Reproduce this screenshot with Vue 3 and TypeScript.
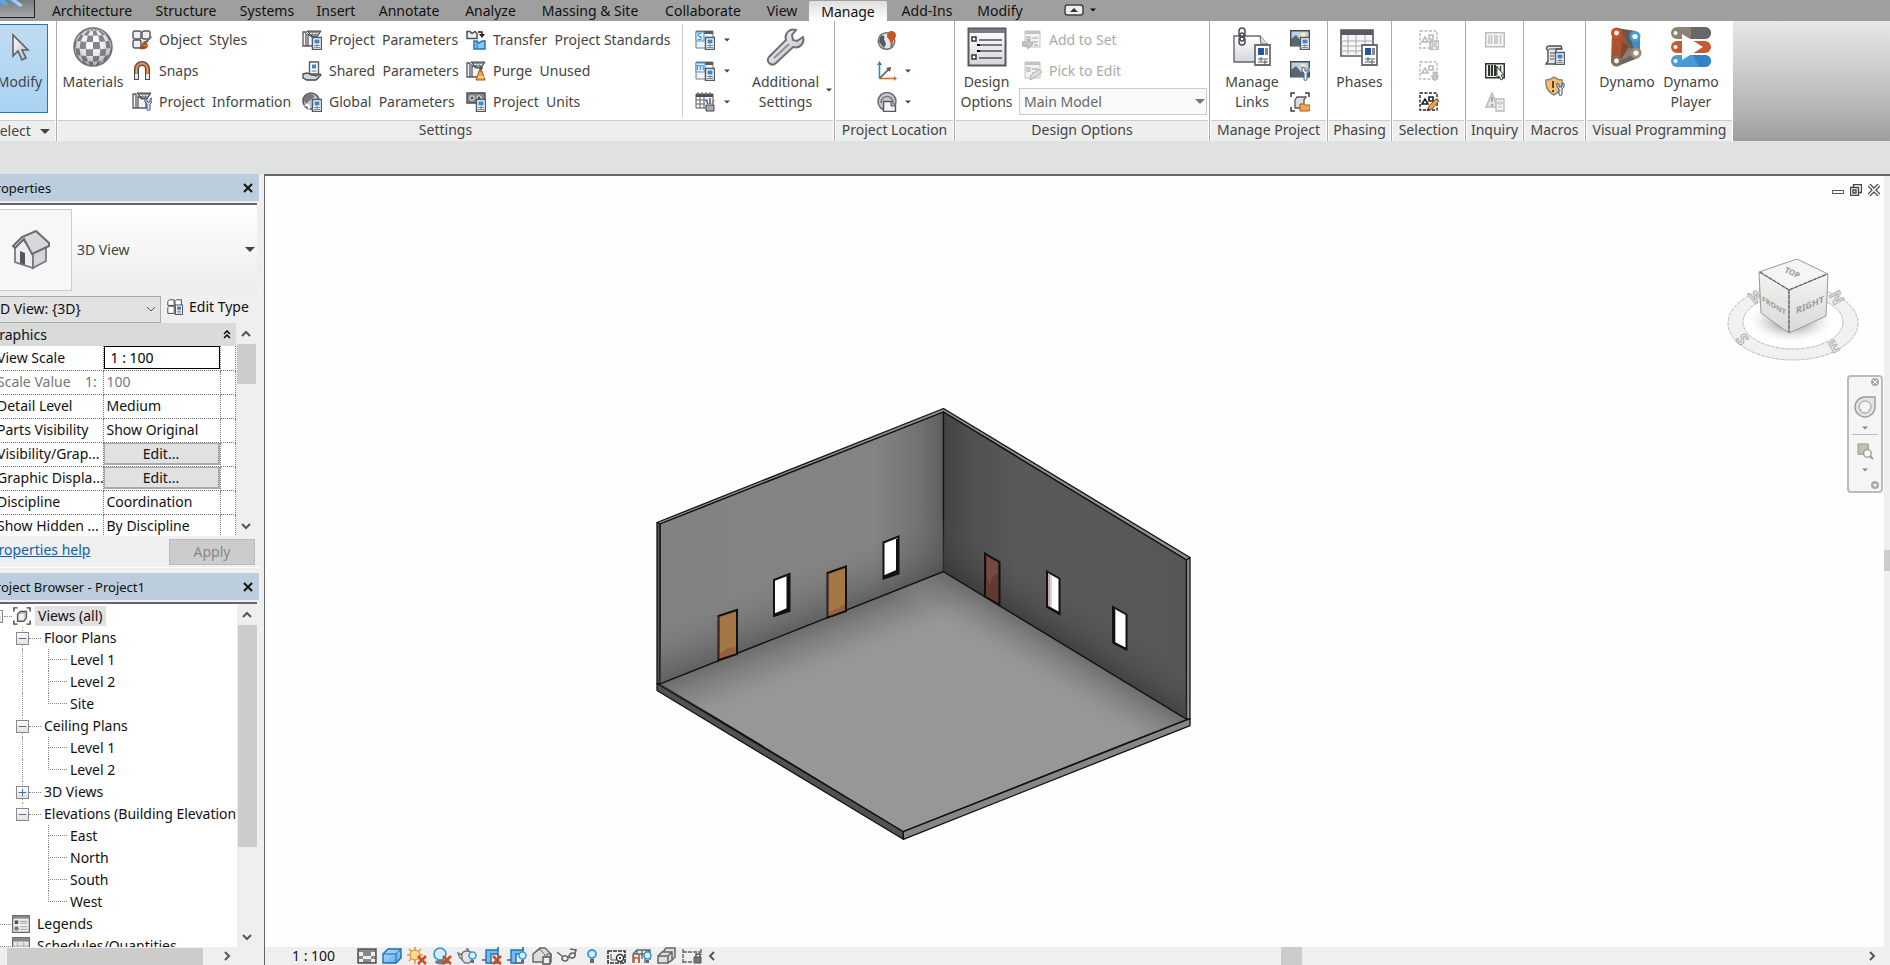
<script setup lang="ts">
interface SmallCommand {
  icon: string
  text: string
}

interface TreeRow {
  level: number
  label: string
  open?: boolean
  last?: boolean
  trunk?: boolean
}

const tabs: string[] = [
  'Architecture', 'Structure', 'Systems', 'Insert', 'Annotate', 'Analyze',
  'Massing & Site', 'Collaborate', 'View', 'Manage', 'Add-Ins', 'Modify',
]

const settingsColumns: SmallCommand[][] = [
  [
    { icon: 'styles', text: 'Object  Styles' },
    { icon: 'snaps', text: 'Snaps' },
    { icon: 'info', text: 'Project  Information' },
  ],
  [
    { icon: 'params', text: 'Project  Parameters' },
    { icon: 'shared', text: 'Shared  Parameters' },
    { icon: 'global', text: 'Global  Parameters' },
  ],
  [
    { icon: 'transfer', text: 'Transfer  Project Standards' },
    { icon: 'purge', text: 'Purge  Unused' },
    { icon: 'units', text: 'Project  Units' },
  ],
]

const templates: SmallCommand[] = [
  { icon: 'structural', text: 'Structural Settings' },
  { icon: 'mep', text: 'MEP Settings' },
  { icon: 'panel', text: 'Panel Schedule Templates' },
]

const selection: SmallCommand[] = [
  { icon: 'selsave', text: 'Save' },
  { icon: 'selload', text: 'Load' },
  { icon: 'seledit', text: 'Edit' },
]

const inquiry: SmallCommand[] = [
  { icon: 'ids', text: 'IDs of Selection' },
  { icon: 'idpick', text: 'Select by ID' },
  { icon: 'warning', text: 'Warnings' },
]

const projectImages: SmallCommand[] = [
  { icon: 'decal', text: 'Decal Types' },
  { icon: 'image', text: 'Manage Images' },
  { icon: 'starting', text: 'Starting View' },
]

const viewControls: string[] = [
  'detail', 'visual', 'sun', 'shadow', 'render', 'crop', 'cropshow',
  'lock', 'glasses', 'bulb', 'temp', 'analytic', 'displace', 'constraint',
]

const treeRows: TreeRow[] = [
  { level: 1, label: 'Floor Plans', open: true },
  { level: 2, label: 'Level 1', trunk: true },
  { level: 2, label: 'Level 2', trunk: true },
  { level: 2, label: 'Site', trunk: true, last: true },
  { level: 1, label: 'Ceiling Plans', open: true },
  { level: 2, label: 'Level 1', trunk: true },
  { level: 2, label: 'Level 2', trunk: true, last: true },
  { level: 1, label: '3D Views', open: false },
  { level: 1, label: 'Elevations (Building Elevation)', open: true, last: true },
  { level: 2, label: 'East' },
  { level: 2, label: 'North' },
  { level: 2, label: 'South' },
  { level: 2, label: 'West', last: true },
]

// Checkered globe: project latitude/longitude cells onto a disc of radius 19.
function point(lat: number, lon: number): string {
  const a = (lat * Math.PI) / 180
  const b = (lon * Math.PI) / 180
  const x = 20 + 19 * Math.cos(a) * Math.sin(b)
  const y = 20 - 19 * (Math.sin(a) * 0.97 - Math.cos(a) * Math.cos(b) * 0.12)
  return `${x.toFixed(1)} ${y.toFixed(1)}`
}

const step = 22.5
const cells: string[] = []
for (let i = -4; i < 4; i++) {
  for (let j = -4; j < 4; j++) {
    if ((i + j) % 2 !== 0) continue
    const lat = i * step
    const lon = j * step
    const pts: string[] = []
    for (let k = 0; k <= 4; k++) pts.push(point(lat, lon + (step * k) / 4))
    for (let k = 4; k >= 0; k--) pts.push(point(lat + step, lon + (step * k) / 4))
    cells.push(`M${pts.join('L')}Z`)
  }
}
const checker = cells.join('')
</script>

<template>
  <div class="app">
    <svg class="defs" aria-hidden="true">
      <defs>
        <linearGradient id="g-paper" x1="0" y1="0" x2="0" y2="1">
          <stop offset="0" stop-color="#fff" /><stop offset="1" stop-color="#d4d6da" />
        </linearGradient>
        <radialGradient id="g-ball" cx=".5" cy=".4" r=".6">
          <stop offset="0" stop-color="#fff" stop-opacity="0" /><stop offset="1" stop-color="#333" stop-opacity=".45" />
        </radialGradient>
        <linearGradient id="g-steel" x1="0" y1="0" x2="1" y2="1">
          <stop offset="0" stop-color="#fff" /><stop offset="1" stop-color="#b4b6ba" />
        </linearGradient>
        <linearGradient id="g-blue" x1="0" y1="0" x2="1" y2="1">
          <stop offset="0" stop-color="#b9e0fa" /><stop offset="1" stop-color="#55a8e4" />
        </linearGradient>
      </defs>

      <symbol id="i-card" viewBox="0 0 20 20">
        <path d="M10.500 7.500h9v12h-9z" fill="#fff" stroke="#555a63" stroke-width="1.500" />
        <path d="M12.500 9.500h5v4h-5z" fill="#3a86cf" />
        <path d="M12 15.500h6M15 14v3M12 17.500h6" stroke="#667" stroke-width=".8" />
      </symbol>
      <symbol id="i-sheet" viewBox="0 0 20 20">
        <path d="M1 2h3v14H1zM4 16h10V4L10 7 6 4v12" fill="#f1f2f3" stroke="#55585f" stroke-width="1.300" />
        <path d="M5 1h14l-4 6h-4z" fill="#8b8e93" stroke="#444" />
        <path d="M8 3.500h8" stroke="#eee" stroke-dasharray="2 1" />
      </symbol>

      <symbol id="i-caret" viewBox="0 0 8 4"><path d="M0 0h8L4 4z" /></symbol>
      <symbol id="i-chev" viewBox="0 0 10 10"><path d="M1 7l4-4 4 4" fill="none" stroke="currentColor" stroke-width="2" /></symbol>
      <symbol id="i-x" viewBox="0 0 10 10"><path d="M1 1l8 8M9 1L1 9" stroke="currentColor" stroke-width="2" fill="none" /></symbol>

      <symbol id="i-styles" viewBox="0 0 20 20">
        <rect x="1" y="1" width="8" height="8" rx="2" fill="#eee" stroke="#55585f" stroke-width="1.400" />
        <rect x="10" y="1" width="8" height="8" rx="2" fill="#eee" stroke="#55585f" stroke-width="1.400" />
        <rect x="1" y="10" width="8" height="8" rx="2" fill="#eee" stroke="#55585f" stroke-width="1.400" />
        <path d="M19 6l-7 6 2 2 6-7z" fill="#666b74" /><path d="M13 11l3 4c0 4-4 5-9 4 3-1 2-7 6-8z" fill="#a84f1d" /><path d="M11 15l4 1" stroke="#e69b55" />
      </symbol>
      <symbol id="i-snaps" viewBox="0 0 20 20">
        <path d="M4.500 19V8a5.500 5.500 0 0 1 11 0v11" fill="none" stroke="#454950" stroke-width="5" />
        <path d="M4.500 13V8a5.500 5.500 0 0 1 11 0v5" fill="none" stroke="#cf6b33" stroke-width="3" />
        <path d="M4.500 13V8a5.500 5.500 0 0 1 11 0v5" fill="none" stroke="#f0a671" stroke-width="1" />
        <path d="M4.500 13v5M15.500 13v5" stroke="#e6e6e8" stroke-width="3" />
      </symbol>
      <symbol id="i-info" viewBox="0 0 20 20">
        <use href="#i-sheet" /><path d="M13 6v4l2 2v5a1.500 1.500 0 0 0 3 0v-5l2-2V6l-2 1v3h-3V7z" fill="#dbe4f0" stroke="#3a4f78" stroke-width="1" />
      </symbol>
      <symbol id="i-params" viewBox="0 0 20 20"><use href="#i-sheet" /><use href="#i-card" /></symbol>
      <symbol id="i-shared" viewBox="0 0 20 20">
        <path d="M7.500 1h9v12h-9z" fill="#fff" stroke="#555a63" stroke-width="1.400" /><path d="M10 3.500h4v4h-4z" fill="#3a86cf" /><path d="M9.500 10h5" stroke="#667" />
        <path d="M1 13l4-1 5 2h3l1 1 4-2 1 1-5 5H5l-4-2z" fill="#d3d4d6" stroke="#454950" stroke-width="1.300" />
      </symbol>
      <symbol id="i-global" viewBox="0 0 20 20">
        <circle cx="9" cy="9" r="8" fill="#c8cacd" stroke="#55585f" stroke-width="1.600" />
        <path d="M9 2c4 1 4 3 2 4L7 9l-3 3-2-3c0-4 3-7 7-7z" fill="#73777e" /><path d="M3 14c3-3 4 0 4 3" stroke="#fff" fill="none" stroke-width="2" /><use href="#i-card" />
      </symbol>
      <symbol id="i-transfer" viewBox="0 0 20 20">
        <path d="M1 1.500h3l2 2 3-2 2 2v5H1z" fill="#eee" stroke="#4d5057" stroke-width="1.500" />
        <path d="M12 2h4v4" stroke="#222" fill="none" stroke-width="1.500" /><path d="M13 4h6l-3 4z" fill="#222" />
        <path d="M8 11h3l2 2 3-2h3v8H8z" fill="#8cc6f2" stroke="#1c75bd" stroke-width="1.500" /><path d="M11 12v7" stroke="#1c75bd" />
      </symbol>
      <symbol id="i-purge" viewBox="0 0 20 20">
        <use href="#i-sheet" /><path d="M15 5v7M14 7h3" stroke="#4d5057" stroke-width="1.500" /><path d="M13 10h3l3 9h-9z" fill="#eea24d" stroke="#a65c1d" /><path d="M12 16h6" stroke="#fff" />
      </symbol>
      <symbol id="i-units" viewBox="0 0 20 20">
        <path d="M1 1h18v10H1z" fill="#85888d" stroke="#494c52" stroke-width="1.400" /><circle cx="6" cy="6" r="2.200" fill="#555" stroke="#fff" /><circle cx="13" cy="6" r="2.200" fill="#555" stroke="#fff" /><use href="#i-card" />
      </symbol>
      <symbol id="i-window" viewBox="0 0 20 20"><path d="M1 1h17v17H1z" fill="#f1f2f3" stroke="#777b82" /><path d="M1 1h17v3H1z" fill="#585c63" /></symbol>
      <symbol id="i-structural" viewBox="0 0 20 20">
        <use href="#i-window" /><path d="M1 2h8v9H1z" fill="#d8edfb" stroke="#4c9bdb" /><text x="2" y="10" font-size="9" font-family="Noto Sans" fill="#1c75bd">S</text><use href="#i-card" />
      </symbol>
      <symbol id="i-mep" viewBox="0 0 20 20">
        <use href="#i-window" /><path d="M1 2h9v9H1z" fill="#d8edfb" stroke="#4c9bdb" /><text x="1" y="9" font-size="9" font-family="Noto Sans" fill="#1c75bd">m</text><use href="#i-card" />
      </symbol>
      <symbol id="i-panel" viewBox="0 0 20 20">
        <path d="M1 2h17v14H1z" fill="#f5f5f5" stroke="#555" /><path d="M1 2h17v3H1z" fill="#4d5057" /><path d="M3 0v4M7 0v4M11 0v4M15 0v4M1 8h12M1 12h9M5 5v11M9 5v11" stroke="#666" />
        <path d="M11 13h8v6h-8z" fill="#aaacb0" stroke="#444" /><path d="M13 12l-2-4M15 12V6" stroke="#2e62b8" stroke-width="1.600" /><path d="M17 12l2-4" stroke="#cf6b33" stroke-width="1.600" />
      </symbol>
      <symbol id="i-pin" viewBox="0 0 20 20">
        <circle cx="9.500" cy="11" r="8.300" fill="#e3e5e8" stroke="#6c7078" stroke-width="1.500" /><path d="M3 7c4-3 5-1 4 2l2 5-2 4-5-6z" fill="#555a63" /><path d="M13 15l4-2-3 5z" fill="#777b82" />
        <path d="M14.500 16L12 9h5z" fill="#ca5424" /><circle cx="14.500" cy="5.500" r="4.500" fill="#ca5424" />
      </symbol>
      <symbol id="i-coords" viewBox="0 0 20 20">
        <path d="M2.500 2v15.500" stroke="#2586d3" stroke-width="1.600" fill="none" /><path d="M0 4l2.500-4L5 4z" fill="#2586d3" /><path d="M2.500 17.500H18" stroke="#d96a2b" stroke-width="1.600" /><path d="M17 15l3 2.500-3 2.500z" fill="#d96a2b" />
        <path d="M3 17L12 8" stroke="#555" stroke-width="1.600" /><path d="M9 7l5-1-1 5z" fill="#555" />
      </symbol>
      <symbol id="i-position" viewBox="0 0 20 20">
        <circle cx="10" cy="9.500" r="9" fill="#c6c8cc" stroke="#686c73" stroke-width="1.500" /><path d="M4 11a6 6 0 0 1 12-1" stroke="#777" fill="none" stroke-width="1.500" /><path d="M6.500 9.500h8l4 4v6h-12z" fill="#f2f2f3" stroke="#55585f" stroke-width="1.400" /><path d="M14 9v5h5" fill="#aaa" stroke="#55585f" />
      </symbol>
      <symbol id="i-optset" viewBox="0 0 20 20"><path d="M3 1h15v16H3z" fill="#f4f4f4" stroke="#c2c4c2" /><path d="M3 1h15v3H3z" fill="#c2c4c2" /><path d="M5 7h3v3H5zM10 8h6M10 12h6M12 15h4" stroke="#bbb" fill="none" stroke-width="1.300" /></symbol>
      <symbol id="i-addset" viewBox="0 0 20 20"><use href="#i-optset" /><path d="M0 12h6V9l5 5-5 5v-3H0z" fill="#c7c8c7" stroke="#aaa" /></symbol>
      <symbol id="i-pick" viewBox="0 0 20 20"><use href="#i-optset" /><path d="M8 19l1-5 8-6 3 3-8 6z" fill="#ddd" stroke="#b1b3b1" /></symbol>
      <symbol id="i-photo" viewBox="0 0 20 20">
        <path d="M.7.700h18.600v15H.7z" fill="#b8d2e8" stroke="#454950" stroke-width="1.400" /><path d="M1 9l5-4 5 6 3-2 5 3v4H1z" fill="#5a666d" /><circle cx="13" cy="5" r="2.400" fill="#ffeaa0" />
      </symbol>
      <symbol id="i-decal" viewBox="0 0 20 20"><use href="#i-photo" /><use href="#i-card" /></symbol>
      <symbol id="i-image" viewBox="0 0 20 20"><use href="#i-photo" /><path d="M12 6v4l2 2v6a1.500 1.500 0 0 0 3 0v-6l3-2V6l-2 1v3h-3V7z" fill="#e8edf4" stroke="#4d678f" /></symbol>
      <symbol id="i-starting" viewBox="0 0 20 20">
        <path d="M1 5V1h4M15 1h4v4M1 15v4h4" fill="none" stroke="#3b3e44" stroke-width="1.500" /><path d="M5 8l2-3h9l-2 3v8H5z" fill="#ddd" stroke="#55585f" stroke-width="1.300" /><path d="M10 12h4l1 1h5v5l-1 1h-9z" fill="#f1a453" stroke="#a65c1d" />
      </symbol>
      <symbol id="i-marquee" viewBox="0 0 20 20">
        <path d="M1 1h17v17H1z" fill="none" stroke="currentColor" stroke-width="1.400" stroke-dasharray="3 1.500" /><path d="M3 12l3-5 3 5z" fill="none" stroke="currentColor" stroke-width="1.600" /><path d="M10 5h4v4h-4z" fill="none" stroke="currentColor" stroke-width="1.600" />
      </symbol>
      <symbol id="i-selsave" viewBox="0 0 20 20"><use href="#i-marquee" color="#bbb" /><path d="M11 11h9v9h-9z" fill="#eee" stroke="#b5b5b5" stroke-width="1.400" /><path d="M13 11v3h4v-3M13 20v-4h5v4" stroke="#aaa" fill="none" /></symbol>
      <symbol id="i-selload" viewBox="0 0 20 20"><use href="#i-marquee" color="#bbb" /><path d="M14 11h4v4h2l-4 5-4-5h2z" fill="#c4c4c4" stroke="#aaa" stroke-width=".7" /></symbol>
      <symbol id="i-seledit" viewBox="0 0 20 20"><use href="#i-marquee" color="#222" /><path d="M8 19l2-5 7-7 3 2-7 8z" fill="#e9a14e" stroke="#93521c" /><path d="M8 19l1-3 2 2z" fill="#333" /></symbol>
      <symbol id="i-bars" viewBox="0 0 20 20"><path d="M.7 2.700h18.600v14H.7z" fill="#f5f5f5" stroke="currentColor" stroke-width="1.500" /><path d="M4 5v9M6.500 5v9M10 5v9M12 5v9M15.500 5v9" stroke="currentColor" stroke-width="1.400" /></symbol>
      <symbol id="i-ids" viewBox="0 0 20 20"><use href="#i-bars" color="#bdbdbd" /></symbol>
      <symbol id="i-idpick" viewBox="0 0 20 20"><use href="#i-bars" color="#2a3529" /><path d="M4 4v11M7 4v11M10 4v11" stroke="#2a3529" stroke-width="2" /><path d="M12 6l7 8h-3l2 4-2 1-2-4-2 2z" fill="#fff" stroke="#444" /></symbol>
      <symbol id="i-warning" viewBox="0 0 20 20"><path d="M1 15L7 1l6 14z" fill="#e4e4e4" stroke="#bbb" stroke-width="1.400" /><path d="M7 5v5M7 12v2" stroke="#aaa" stroke-width="2" /><path d="M11 7h8v12h-8z" fill="#f5f5f5" stroke="#bbb" stroke-width="1.400" /><path d="M13 10h4v2h-4zM13 15h4" stroke="#bbb" fill="none" /></symbol>
      <symbol id="i-macro" viewBox="0 0 20 20">
        <path d="M3 5v11l-2 3h10V4h6l-1-3H4C1 1 1 5 3 5z" fill="#e5e6e8" stroke="#4d5057" stroke-width="1.400" /><path d="M4 4h12M5 8h5M5 11h4M5 14h4" stroke="#4d5057" /><use href="#i-card" />
      </symbol>
      <symbol id="i-security" viewBox="0 0 20 20">
        <path d="M1 4c4 0 5-1 8-3 3 2 4 3 8 3 1 7-2 12-8 15C3 16 0 11 1 4z" fill="#f3bd72" stroke="#8b8577" stroke-width="1.400" /><path d="M8 5v7M8 14v2" stroke="#5b4325" stroke-width="2" /><path d="M12 7v4l2 2v5a1.500 1.500 0 0 0 3 0v-5l2-2V7l-2 1v3h-3V8z" fill="#dfe8f3" stroke="#3d5b89" />
      </symbol>
      <symbol id="i-edittype" viewBox="0 0 20 20">
        <path d="M1 3l2-2h6v7H1zM10 3l2-2h6v7h-8zM1 11l2-2h6v9H1z" fill="#fff" stroke="#444" stroke-width="1.200" /><use href="#i-card" />
      </symbol>
      <symbol id="i-views" viewBox="0 0 20 20"><path d="M1 5V1h4M15 1h4v4M1 15v4h4M15 19h4v-4" fill="none" stroke="#444" stroke-width="1.600" /><path d="M5 8l3-3h7v7l-3 4H5z" fill="#c9cbce" stroke="#555" stroke-width="1.400" /><path d="M7 8h5v6H7z" fill="#f5f5f5" /></symbol>
      <symbol id="i-legend" viewBox="0 0 20 20"><path d="M.7.700h18.600v18.600H.7z" fill="#eee" stroke="#6c6c6c" stroke-width="1.400" /><path d="M1 1h18v3H1z" fill="#888" /><path d="M3 6h4v4H3z" fill="#555" /><circle cx="5" cy="15" r="2.500" fill="#777" /><path d="M9 7h8M9 9h8M9 13h8M9 16h8" stroke="#999" /></symbol>
      <symbol id="i-schedule" viewBox="0 0 20 20"><path d="M.7.700h18.600v18.600H.7z" fill="#e6e6e6" stroke="#6c6c6c" stroke-width="1.400" /><path d="M1 1h18v4H1z" fill="#888" /><path d="M6 5v14M13 5v14M1 10h18M1 14h18" stroke="#aaa" /></symbol>

      <symbol id="i-cursor" viewBox="0 0 32 32"><path d="M9 4v21l5-5 4 9 4-2-4-8h6z" fill="url(#g-steel)" stroke="#5d6168" stroke-width="1.600" /></symbol>
      <symbol id="i-wrench" viewBox="0 0 40 40">
        <path d="M30 3c-6-2-12 3-10 10L3 30c-4 5 3 10 7 6l17-16c7 2 12-4 10-10l-6 4-4-1-1-5z" fill="url(#g-steel)" stroke="#6d7077" stroke-width="2" /><path d="M8 31L23 17" stroke="#8e9197" stroke-width="2" />
      </symbol>
      <symbol id="i-design" viewBox="0 0 40 40">
        <path d="M1.500 1.500h37v37h-37z" fill="url(#g-paper)" stroke="#55585f" stroke-width="2" /><path d="M2 2h36v4H2z" fill="#777b85" />
        <path d="M5 10h4v4H5zM5 28h4v4H5z" fill="#fff" stroke="#333" stroke-width="1.500" /><path d="M12 13h23M13 18h22M13 24h22M12 31h23" stroke="#4d5057" stroke-width="1.600" /><path d="M10 17h3v2h-3zM10 23h3v2h-3z" />
      </symbol>
      <symbol id="i-bigcard" viewBox="0 0 40 40"><path d="M23 18h15v20H23z" fill="#fff" stroke="#686c74" stroke-width="1.800" /><path d="M26 21h6v7h-6z" fill="#2554a5" /><path d="M33 21h3v7h-3z" fill="#888" /><path d="M26 32h10M26 35h10M29 30v4M33 33v4" stroke="#555" /></symbol>
      <symbol id="i-links" viewBox="0 0 40 40">
        <path d="M2 9h26l8 9v17H2z" fill="url(#g-paper)" stroke="#66696f" stroke-width="1.400" /><path d="M28 9l1 8h7" fill="#ddd" stroke="#66696f" />
        <g fill="none" stroke="#4a4d52" stroke-width="1.500"><rect x="7" y="1" width="6" height="9" rx="3" /><rect x="8" y="6" width="4" height="8" rx="2" /><rect x="7" y="10" width="6" height="8" rx="3" /></g><use href="#i-bigcard" />
      </symbol>
      <symbol id="i-phases" viewBox="0 0 40 40"><path d="M2 3h32v26H2z" fill="#f8f8f8" stroke="#55585f" stroke-width="1.600" /><path d="M2 3h32v5H2z" fill="#555a63" /><path d="M9 8v21M17 8v21M26 8v21M2 14h32M2 19h32M2 24h32" stroke="#aaa" /><use href="#i-bigcard" /></symbol>
      <symbol id="i-dynamo" viewBox="0 0 34 40">
        <path d="M7 1l19 3 5 22-3 5L8 39z" fill="#686561" /><path d="M7 1l14 4-6 14-9 15z" fill="#6a5750" /><path d="M2 6a5 5 0 0 1 9-2l8 16L10 36a5 5 0 0 1-9-2z" fill="#ad522f" /><path d="M12 14l7 6-9 14z" fill="#7f4939" />
        <path d="M19 20l7 6-16 8z" fill="#8a7f70" /><path d="M15 11l9-5 5 20-10-7z" fill="#55605f" /><path d="M21 10l9-1v17l-7-6z" fill="#468cc4" />
        <circle cx="6.500" cy="6" r="5.500" fill="#c85027" /><circle cx="6.500" cy="34" r="5.500" fill="#826f59" /><circle cx="25" cy="9.500" r="5.500" fill="#4a9bd5" /><circle cx="26" cy="26" r="5.500" fill="#9d8e79" />
        <g fill="#fff"><circle cx="6.500" cy="6" r="2.400" /><circle cx="6.500" cy="34" r="2.400" /><circle cx="25" cy="9.500" r="2.600" /><circle cx="26" cy="26" r="2.600" /></g>
      </symbol>
      <symbol id="i-player" viewBox="0 0 40 40">
        <rect y="0" width="40" height="12" rx="6" fill="#8b8271" /><path d="M20 0h14a6 6 0 0 1 0 12H20z" fill="#676767" /><rect y="14" width="40" height="12" rx="6" fill="#c85a31" /><rect y="28" width="40" height="12" rx="6" fill="#4a9bd5" /><path d="M22 28h12a6 6 0 0 1 0 12H28z" fill="#3383c4" />
        <g fill="#fff"><circle cx="4.500" cy="6" r="2" /><circle cx="4.500" cy="20" r="2" /><circle cx="4.500" cy="34" r="2" /><path d="M11 7l21 13-21 13z" /></g>
      </symbol>
      <symbol id="i-house" viewBox="0 0 40 40">
        <path d="M4 16L12 9l10 14v15L4 32z" fill="#eeeef0" stroke="#777a80" stroke-width="1.800" /><path d="M22 22l13-7v16L22 38z" fill="#d4d5d9" stroke="#777a80" stroke-width="1.800" />
        <path d="M2 16L11 7l14-6 13 12v3L21 24 13 9 4 18z" fill="#d8d8da" stroke="#696c73" stroke-width="2" /><path d="M9 21l5 2v12l-5-2z" fill="#54565b" />
      </symbol>

      <symbol id="i-detail" viewBox="0 0 20 20"><path d="M1 3h18v14H1z" fill="#888" stroke="#555" stroke-width="1.500" /><path d="M2 6h4v4H2zM14 6h4v4h-4zM6 10h8v3H6zM14 13h4v3h-4zM2 13h4v3H2z" fill="#eee" /></symbol>
      <symbol id="i-cross" viewBox="0 0 20 20"><path d="M11 10l8 8M19 10l-8 8" stroke="#ca4f25" stroke-width="2.600" /></symbol>
      <symbol id="i-lamp" viewBox="0 0 20 20"><circle cx="15.500" cy="9.500" r="3.500" fill="#d6effc" stroke="#3999d8" stroke-width="1.600" /><path d="M14 14h3v3h-3z" fill="#667" /></symbol>
      <symbol id="i-visual" viewBox="0 0 20 20"><path d="M1 8l5-5h13v9l-5 5H1z" fill="url(#g-blue)" stroke="#176fae" stroke-width="1.400" /><path d="M1 8h13l5-5M14 8v9" fill="none" stroke="#176fae" /></symbol>
      <symbol id="i-sun" viewBox="0 0 20 20"><path d="M8 0v18M0 9h16M2 3l12 12M14 3L2 15" stroke="#e29a3e" stroke-width="1.600" /><circle cx="8" cy="9" r="5" fill="#ffd993" stroke="#d9872b" /><use href="#i-cross" /></symbol>
      <symbol id="i-shadow" viewBox="0 0 20 20"><ellipse cx="10" cy="16" rx="7" ry="2.500" fill="#777" /><circle cx="8" cy="8" r="6" fill="#d3edfb" stroke="#378fc9" stroke-width="1.600" /><use href="#i-cross" /></symbol>
      <symbol id="i-render" viewBox="0 0 20 20"><path d="M5 8c1-4 9-4 10 0v6l-3 3H8l-3-3zM5 9L1 7l2 5 3 2M9 3h2v2" fill="#e3e3e3" stroke="#777" stroke-width="1.400" /><use href="#i-lamp" /></symbol>
      <symbol id="i-frame" viewBox="0 0 20 20"><path d="M0 14h4M16 5V1M8 17h8V8" fill="none" stroke="#555" stroke-width="1.500" /><path d="M4 17V4h12v4H9v9z" fill="#77baea" stroke="#1b75b9" stroke-width="1.400" /></symbol>
      <symbol id="i-crop" viewBox="0 0 20 20"><use href="#i-frame" /><use href="#i-cross" /></symbol>
      <symbol id="i-cropshow" viewBox="0 0 20 20"><use href="#i-frame" /><use href="#i-lamp" /></symbol>
      <symbol id="i-lock" viewBox="0 0 20 20"><path d="M1 8l7-6h5l6 6v8H1z" fill="#ddd" stroke="#666" stroke-width="1.400" /><path d="M1 8l7-5 5 6v9" fill="none" stroke="#666" /><path d="M11 11h7v7h-7z" fill="#eee" stroke="#555" stroke-width="1.400" /><path d="M15 11V8h4v3" fill="none" stroke="#555" /></symbol>
      <symbol id="i-glasses" viewBox="0 0 20 20"><path d="M0 6l5 4M5 12a3 3 0 1 0 6 0c-1-3-5-3-6 0zM12 10a3 3 0 1 0 6-2c-2-2-5-1-6 2zM11 12l1-2M18 8l1-4-6-1" fill="none" stroke="#666" stroke-width="1.600" /></symbol>
      <symbol id="i-bulb" viewBox="0 0 20 20"><circle cx="10" cy="8" r="4" fill="#d6effc" stroke="#3999d8" stroke-width="1.800" /><path d="M8 13h4v4H8z" fill="#667" /></symbol>
      <symbol id="i-temp" viewBox="0 0 20 20"><path d="M1 5h17v12H1z" fill="#eee" stroke="#333" stroke-width="1.600" stroke-dasharray="4 1" /><path d="M4 8v6h5" fill="none" stroke="#555" /><circle cx="13" cy="12" r="3.500" fill="#fff" stroke="#333" stroke-width="1.500" /><circle cx="13" cy="12" r="1" /></symbol>
      <symbol id="i-analytic" viewBox="0 0 20 20"><path d="M1 8l4-4h13v10M1 8h12v9M1 8v9M7 8v9M5 4v4M10 4v9M14 4v9M13 8l5-4" fill="none" stroke="#666" stroke-width="1.400" /><path d="M2 10v7M7 12v5M2 12h5" stroke="#c65a33" stroke-width="1.500" /><use href="#i-lamp" /></symbol>
      <symbol id="i-displace" viewBox="0 0 20 20"><path d="M6 6l3-4h9v9l-3 3" fill="#ddd" stroke="#666" stroke-width="1.500" /><path d="M1 10l4-4h10v8l-4 3H1zM1 10h10v7M11 10l4-4" fill="#ddd" stroke="#666" stroke-width="1.500" /></symbol>
      <symbol id="i-constraint" viewBox="0 0 20 20"><path d="M1 3v14M19 3v6M1 6h18M1 16h10" stroke="#666" stroke-width="1.400" stroke-dasharray="4 1" /><path d="M12 11h7v6h-7z" fill="#777" stroke="#555" /><path d="M14 11V8h4v3" fill="none" stroke="#555" stroke-width="1.500" /></symbol>
    </svg>

    <nav class="tabs" aria-label="Ribbon tabs">
      <button class="app-menu" aria-label="Application menu">
        <svg viewBox="0 0 46 17"><path d="M12 0h5l3 4-4 2-4-3zM20 0h8l7 5-4 2z" fill="#5ba4dd" /><path d="M28 0l7 5-3 2-9-7z" fill="#a2cdf0" /></svg>
      </button>
      <button v-for="t in tabs" :key="t" class="tab" :class="{ active: t === 'Manage' }">{{ t }}</button>
      <button class="minimise" aria-label="Minimise ribbon">
        <svg class="pill" viewBox="0 0 20 12"><rect x="1" y="1" width="18" height="10" rx="2.500" fill="#eee" stroke="#444" stroke-width="1.500" /><path d="M6 8l4-4 4 4z" fill="#333" /></svg>
        <svg class="caret dark"><use href="#i-caret" /></svg>
      </button>
    </nav>

    <header class="ribbon">
      <section class="panel">
        <div class="body">
          <button class="modify"><svg class="i32"><use href="#i-cursor" /></svg><span>Modify</span></button>
        </div>
        <h2 class="caption select-caption">Select <svg class="caret"><use href="#i-caret" /></svg></h2>
      </section>

      <section class="panel">
        <div class="body settings">
          <button class="big">
            <svg class="i40" viewBox="0 0 40 40">
              <circle cx="20" cy="20" r="19" fill="#fff" /><path :d="checker" fill="#7d7f85" />
              <circle cx="20" cy="20" r="19" fill="url(#g-ball)" stroke="#6d6f75" stroke-width="1.500" />
            </svg>
            <span>Materials</span>
          </button>
          <div v-for="(col, c) in settingsColumns" :key="c" class="stack">
            <button v-for="cmd in col" :key="cmd.text" class="small"><svg class="i20"><use :href="'#i-' + cmd.icon" /></svg>{{ cmd.text }}</button>
          </div>
          <div class="stack divided">
            <button v-for="cmd in templates" :key="cmd.text" class="small" :aria-label="cmd.text"><svg class="i20"><use :href="'#i-' + cmd.icon" /></svg><svg class="caret"><use href="#i-caret" /></svg></button>
          </div>
          <div class="with-caret">
            <button class="big"><svg class="i40"><use href="#i-wrench" /></svg><span>Additional<br>Settings</span></button>
            <svg class="caret"><use href="#i-caret" /></svg>
          </div>
        </div>
        <h2 class="caption">Settings</h2>
      </section>

      <section class="panel">
        <div class="body location">
          <div class="stack">
            <button class="small" aria-label="Location"><svg class="i20"><use href="#i-pin" /></svg></button>
            <button class="small" aria-label="Coordinates"><svg class="i20"><use href="#i-coords" /></svg><svg class="caret"><use href="#i-caret" /></svg></button>
            <button class="small" aria-label="Position"><svg class="i20"><use href="#i-position" /></svg><svg class="caret"><use href="#i-caret" /></svg></button>
          </div>
        </div>
        <h2 class="caption">Project Location</h2>
      </section>

      <section class="panel">
        <div class="body design">
          <button class="big"><svg class="i40"><use href="#i-design" /></svg><span>Design<br>Options</span></button>
          <div class="stack">
            <button class="small" disabled><svg class="i20"><use href="#i-addset" /></svg>Add to Set</button>
            <button class="small" disabled><svg class="i20"><use href="#i-pick" /></svg>Pick to Edit</button>
            <div class="combo model">
              <select aria-label="Active design option"><option>Main Model</option></select>
              <svg class="caret wide"><use href="#i-caret" /></svg>
            </div>
          </div>
        </div>
        <h2 class="caption">Design Options</h2>
      </section>

      <section class="panel">
        <div class="body manage">
          <button class="big"><svg class="i40"><use href="#i-links" /></svg><span>Manage<br>Links</span></button>
          <div class="stack">
            <button v-for="cmd in projectImages" :key="cmd.text" class="small" :aria-label="cmd.text"><svg class="i20"><use :href="'#i-' + cmd.icon" /></svg></button>
          </div>
        </div>
        <h2 class="caption">Manage Project</h2>
      </section>

      <section class="panel">
        <div class="body centre"><button class="big"><svg class="i40"><use href="#i-phases" /></svg><span>Phases</span></button></div>
        <h2 class="caption">Phasing</h2>
      </section>

      <section class="panel">
        <div class="body centre">
          <div class="stack"><button v-for="cmd in selection" :key="cmd.text" class="small" :aria-label="cmd.text"><svg class="i20"><use :href="'#i-' + cmd.icon" /></svg></button></div>
        </div>
        <h2 class="caption">Selection</h2>
      </section>

      <section class="panel">
        <div class="body centre">
          <div class="stack"><button v-for="cmd in inquiry" :key="cmd.text" class="small" :aria-label="cmd.text"><svg class="i20"><use :href="'#i-' + cmd.icon" /></svg></button></div>
        </div>
        <h2 class="caption">Inquiry</h2>
      </section>

      <section class="panel">
        <div class="body centre">
          <div class="stack pair">
            <button class="small" aria-label="Macro Manager"><svg class="i20"><use href="#i-macro" /></svg></button>
            <button class="small" aria-label="Macro Security"><svg class="i20"><use href="#i-security" /></svg></button>
          </div>
        </div>
        <h2 class="caption">Macros</h2>
      </section>

      <section class="panel last">
        <div class="body dyn">
          <button class="big"><svg class="i40"><use href="#i-dynamo" /></svg><span>Dynamo</span></button>
          <button class="big"><svg class="i40"><use href="#i-player" /></svg><span>Dynamo<br>Player</span></button>
        </div>
        <h2 class="caption">Visual Programming</h2>
      </section>
      <div class="ribbon-rest"></div>
    </header>

    <div class="options-bar"></div>

    <main class="work">
      <aside class="dock">
        <section class="properties">
          <h2 class="title">Properties <button aria-label="Close properties"><svg class="i10"><use href="#i-x" /></svg></button></h2>
          <button class="type">
            <span class="thumb"><svg class="i40"><use href="#i-house" /></svg></span>
            <span class="type-name">3D View</span>
            <svg class="caret wide"><use href="#i-caret" /></svg>
          </button>
          <div class="instance">
            <div class="combo view">
              <select aria-label="View"><option>3D View: {3D}</option></select>
              <svg class="i10 thin" viewBox="0 0 10 10"><path d="M1 3l4 4 4-4" fill="none" stroke="#555" /></svg>
            </div>
            <button class="edit-type"><svg class="i16"><use href="#i-edittype" /></svg>Edit Type</button>
          </div>
          <div class="grid-area">
            <div class="grid-body">
              <h3 class="group">Graphics <svg class="i10" viewBox="0 0 10 10"><path d="M2 4l3-3 3 3M2 8l3-3 3 3" fill="none" stroke="#000" stroke-width="1.500" /></svg></h3>
              <table class="props">
                <colgroup><col class="name"><col class="value"><col></colgroup>
                <tbody>
                  <tr><th><label for="scale">View Scale</label></th><td class="flush"><input id="scale" value="1 : 100"></td><td></td></tr>
                  <tr class="muted"><th>Scale Value &nbsp; &nbsp;1:</th><td>100</td><td></td></tr>
                  <tr><th>Detail Level</th><td>Medium</td><td></td></tr>
                  <tr><th>Parts Visibility</th><td>Show Original</td><td></td></tr>
                  <tr><th>Visibility/Grap...</th><td class="flush"><button class="edit">Edit...</button></td><td></td></tr>
                  <tr><th>Graphic Displa...</th><td class="flush"><button class="edit">Edit...</button></td><td></td></tr>
                  <tr><th>Discipline</th><td>Coordination</td><td></td></tr>
                  <tr><th>Show Hidden ...</th><td>By Discipline</td><td></td></tr>
                </tbody>
              </table>
            </div>
            <div class="vscroll"><svg class="i10"><use href="#i-chev" /></svg><div class="thumb-bar short"></div><svg class="i10 down"><use href="#i-chev" /></svg></div>
          </div>
          <div class="foot"><a href="#help">Properties help</a><button disabled>Apply</button></div>
        </section>

        <section class="browser">
          <h2 class="title">Project Browser - Project1 <button aria-label="Close project browser"><svg class="i10"><use href="#i-x" /></svg></button></h2>
          <div class="tree-area">
            <ul class="tree">
              <li class="row root">
                <button class="toggle" aria-label="Collapse"><svg viewBox="0 0 13 13"><path d="M2 6.500h9" stroke="#2456a5" /></svg></button>
                <span class="dash root-dash"></span><svg class="i18"><use href="#i-views" /></svg><span class="label selected">Views (all)</span>
              </li>
              <li v-for="(r, n) in treeRows" :key="n" class="row">
                <template v-if="r.level === 1">
                  <span class="toggle-cell" :class="{ end: r.last }">
                    <button class="toggle" :aria-label="r.open ? 'Collapse' : 'Expand'"><svg viewBox="0 0 13 13"><path :d="r.open ? 'M2 6.500h9' : 'M2 6.500h9M6.500 2v9'" stroke="#2456a5" /></svg></button>
                  </span>
                  <span class="dash"></span><span class="label">{{ r.label }}</span>
                </template>
                <template v-else>
                  <span class="trunk" :class="{ on: r.trunk }"></span>
                  <span class="elbow" :class="{ end: r.last }"><i></i><i></i></span>
                  <span class="label leaf">{{ r.label }}</span>
                </template>
              </li>
              <li class="row root"><span class="dash first-dash"></span><svg class="i18"><use href="#i-legend" /></svg><span class="label">Legends</span></li>
              <li class="row root"><span class="dash first-dash"></span><svg class="i18"><use href="#i-schedule" /></svg><span class="label">Schedules/Quantities</span></li>
            </ul>
            <div class="vscroll"><svg class="i10"><use href="#i-chev" /></svg><div class="thumb-bar tall"></div><svg class="i10 down"><use href="#i-chev" /></svg></div>
          </div>
          <div class="hscroll"><div class="thumb-bar"></div><svg class="i10 right"><use href="#i-chev" /></svg></div>
        </section>
      </aside>

      <section class="viewport">
        <div class="canvas">
          <svg class="model-drawing" viewBox="0 0 570 460" role="img" aria-label="Room with two walls and a floor">
            <defs>
              <linearGradient id="w1" x1="0" y1="0" x2="1" y2="0"><stop offset="0" stop-color="#828282" /><stop offset=".75" stop-color="#848484" /><stop offset=".9" stop-color="#747474" /><stop offset="1" stop-color="#5e5e5e" /></linearGradient>
              <linearGradient id="w2" x1="0" y1="0" x2="1" y2="0"><stop offset="0" stop-color="#434343" /><stop offset=".12" stop-color="#505050" /><stop offset=".3" stop-color="#595959" /><stop offset="1" stop-color="#575757" /></linearGradient>
              <linearGradient id="s1" gradientUnits="userSpaceOnUse" x1="162" y1="238" x2="141" y2="185"><stop offset="0" stop-color="#4c4c4c" stop-opacity=".65" /><stop offset="1" stop-color="#777" stop-opacity="0" /></linearGradient>
              <linearGradient id="s2" gradientUnits="userSpaceOnUse" x1="425" y1="255" x2="451" y2="214"><stop offset="0" stop-color="#383838" stop-opacity=".7" /><stop offset="1" stop-color="#555" stop-opacity="0" /></linearGradient>
              <linearGradient id="f1" gradientUnits="userSpaceOnUse" x1="162" y1="238" x2="181" y2="286"><stop offset="0" stop-color="#686868" stop-opacity=".9" /><stop offset=".5" stop-color="#7e7e7e" stop-opacity=".6" /><stop offset="1" stop-color="#969696" stop-opacity="0" /></linearGradient>
              <linearGradient id="f2" gradientUnits="userSpaceOnUse" x1="425" y1="255" x2="400" y2="296"><stop offset="0" stop-color="#686868" stop-opacity=".9" /><stop offset=".5" stop-color="#808080" stop-opacity=".6" /><stop offset="1" stop-color="#969696" stop-opacity="0" /></linearGradient>
            </defs>
            <g stroke="#111" stroke-width="1.300" stroke-linejoin="round">
              <path d="M17 132.500L303.500 18.500 550 167.500l-3.500 2.500L303.500 22 20 134z" fill="#8f8f8f" />
              <path d="M20 134L303.500 22v159.700L20 294z" fill="url(#w1)" />
              <path d="M303.500 22l243 148v159.300L303.500 181.700z" fill="url(#w2)" />
              <path d="M17 132.500l3 1.500v160l-3-.5z" fill="#555" />
              <path d="M546.500 170l3.500-2.500v161.200l-3.500.6z" fill="#929292" />
              <path d="M20 294l283.500-112.300 243 147.600L263.300 441.700z" fill="#979797" />
            </g>
            <path d="M20 294l283.500-112.300v-55L20 239z" fill="url(#s1)" />
            <path d="M303.500 181.700l243 147.600v-55l-243-146z" fill="url(#s2)" />
            <path d="M20 294l283.500-112.300 243 147.600L263.300 441.700z" fill="url(#f1)" />
            <path d="M20 294l283.500-112.300 243 147.600L263.300 441.700z" fill="url(#f2)" />
            <g stroke="#111" stroke-width="1.300" stroke-linejoin="round">
              <path d="M17 293.500l246.300 148.200v7.600L17 300.500z" fill="#525252" />
              <path d="M263.300 441.700L550 328.700v7L263.300 449.300z" fill="#878787" />
              <path d="M20 294l283.500-112.300 243 147.600" fill="none" />
            </g>
            <g stroke="#111" stroke-width="2">
              <path d="M78.500 226l18.500-6v44l-18.500 6z" fill="#a67746" /><path d="M187.500 183l18.500-6.500v44.500l-18.500 6.500z" fill="#a67746" />
              <path d="M134 190l15.500-6v37L134 226z" fill="#fff" /><path d="M243.500 152.500l15-6v37l-15 5z" fill="#fff" />
              <path d="M345 163.500l14.500 8.500v43l-14.500-8.500z" fill="#60392f" />
              <path d="M407 181.500l12.500 7v35.500l-12.500-7z" fill="#fff" /><path d="M473 217l13.500 7.500v35L473 252.500z" fill="#fff" />
            </g>
            <g stroke-width="2" fill="none">
              <path d="M79 227v42M188 184v42" stroke="#713b2d" stroke-width="1" /><path d="M148 186v35M257.500 149v34" stroke="#111" stroke-width="3" /><path d="M135 225l14-6M244 187l14-6" stroke="#111" stroke-width="3" />
              <path d="M409 184v34M475 220v34" stroke="#8a5a4a" stroke-width="1" /><path d="M411 185v34" stroke="#aaa" stroke-width="1" /><path d="M408 217l11 6M474 253l12 6M474 219v34" stroke="#111" stroke-width="2" />
            </g>
            <path d="M80 263l8-5 8-1v6l-16 5zM189 222l9-4 7-5v7l-16 6z" fill="#965f42" /><path d="M347 167l11 6v10l-6 5-2 8-3-8z" fill="#764940" />
          </svg>

          <div class="window-buttons">
            <button aria-label="Minimise view"><svg viewBox="0 0 12 12"><path d="M.5 6.500h11v3H.5z" fill="#fff" stroke="#555" /></svg></button>
            <button aria-label="Restore view"><svg viewBox="0 0 12 12"><path d="M3.500 3V.5h8v8H9M.5 3.500h8v8h-8zM3 6h3v3H3z" fill="none" stroke="#444" stroke-width="1.400" /></svg></button>
            <button aria-label="Close view"><svg viewBox="0 0 12 12"><path d="M1 1l10 10M11 1L1 11" stroke="#444" stroke-width="4" /><path d="M1 1l10 10M11 1L1 11" stroke="#fff" stroke-width="1.600" /></svg></button>
          </div>

          <svg class="cube" viewBox="0 0 140 110" role="img" aria-label="View cube">
            <defs>
              <radialGradient id="cs"><stop offset=".3" stop-color="#999" stop-opacity=".8" /><stop offset="1" stop-color="#fff" stop-opacity="0" /></radialGradient>
              <linearGradient id="cf" x1="0" y1="0" x2="0" y2="1"><stop offset="0" stop-color="#f3f3f3" /><stop offset="1" stop-color="#d9d9d9" /></linearGradient>
            </defs>
            <ellipse cx="70" cy="67" rx="65" ry="37" fill="#f1f1f1" stroke="#bbb" stroke-dasharray="4 1" /><ellipse cx="70" cy="66" rx="50" ry="27" fill="#fff" stroke="#bbb" stroke-dasharray="4 1" /><ellipse cx="68" cy="65" rx="45" ry="23" fill="url(#cs)" />
            <g fill="#e8e8e8" stroke="#a5a5a5" stroke-width=".8" font-family="Noto Sans" font-weight="700" font-size="16"><text x="14" y="89" transform="rotate(50 19 84)">S</text><text x="106" y="96" transform="rotate(-30 111 90)">E</text><text x="106" y="46" transform="rotate(60 112 42)">N</text><text x="27" y="46" transform="rotate(-25 34 42)">W</text></g>
            <g stroke="#9a9a9a" stroke-width="1"><path d="M36 16L74 3l31 15-39 16z" fill="#f5f5f5" /><path d="M36 16l30 18v43L38 57z" fill="url(#cf)" /><path d="M66 34l39-16-2 42-37 17z" fill="url(#cf)" /></g>
            <path d="M37 16l29 18 38-16M66 34v42" fill="none" stroke="#666" stroke-width="1.200" stroke-dasharray="4 1" />
            <g fill="#999" font-family="Noto Sans" font-weight="700" font-size="8"><text transform="translate(39 45) skewY(31)" font-size="7">FRONT</text><text transform="translate(73 58) skewY(-23)" font-size="9">RIGHT</text><text transform="translate(61 16) rotate(24)">TOP</text></g>
          </svg>

          <div class="navbar">
            <button class="corner" aria-label="Close navigation bar"><svg viewBox="0 0 8 8"><circle cx="4" cy="4" r="4" fill="#aaa" /><path d="M2 2l4 4M6 2L2 6" stroke="#fff" /></svg></button>
            <button class="wheel" aria-label="Steering wheel"><svg viewBox="0 0 22 22"><path d="M11 1h10v10A10 10 0 1 1 11 1z" fill="#e4e4e4" stroke="#9b9b9b" stroke-width="1.400" /><circle cx="11" cy="11" r="6" fill="#f7f7f7" stroke="#999" /><path d="M6 15l2-2M16 15l-2-2" stroke="#999" /></svg></button>
            <svg class="caret"><use href="#i-caret" /></svg>
            <hr>
            <button class="zoom" aria-label="Zoom"><svg viewBox="0 0 18 18"><path d="M1 1h11v11H1z" fill="#bdc2b3" stroke="#999" /><circle cx="11" cy="11" r="4" fill="#fff" stroke="#999" stroke-width="1.500" /><path d="M14 14l3 3" stroke="#999" stroke-width="2" /></svg></button>
            <svg class="caret"><use href="#i-caret" /></svg>
            <button class="corner bottom" aria-label="Navigation bar options"><svg viewBox="0 0 8 8"><circle cx="4" cy="4" r="4" fill="#aaa" /><path d="M2 3h4L4 6z" fill="#fff" /></svg></button>
          </div>
        </div>
        <div class="vbar"><i></i></div>
        <div class="status">
          <button class="scale">1 : 100</button>
          <button v-for="v in viewControls" :key="v" class="ctl" :aria-label="v"><svg class="i20"><use :href="'#i-' + v" /></svg></button>
          <button class="ctl" aria-label="Scroll left"><svg class="i10 left"><use href="#i-chev" /></svg></button>
          <div class="rail"><i></i></div>
          <svg class="i10 right"><use href="#i-chev" /></svg>
        </div>
      </section>
    </main>
  </div>
</template>

<style>
html, body { margin: 0; overflow: hidden; }
</style>

<style scoped>
* { box-sizing: border-box; }
.app {
  display: flex; flex-direction: column; height: 100vh; margin-left: -12px;
  background: #efefef; color: #111; font: 14px/20px "Noto Sans", "Open Sans", sans-serif;
}
.defs { position: absolute; width: 0; height: 0; }
button { padding: 0; border: 0; background: none; color: inherit; font: inherit; white-space: pre; }
h2, h3 { margin: 0; font: inherit; }
svg { display: block; flex: none; }
.i10 { width: 10px; height: 10px; color: #555; }
.i16 { width: 16px; height: 16px; }
.i18 { width: 18px; height: 18px; }
.i20 { width: 20px; height: 20px; }
.i32 { width: 32px; height: 32px; }
.i40 { width: 40px; height: 40px; }
.down { transform: rotate(180deg); }
.right { transform: rotate(90deg); }
.left { transform: rotate(-90deg); }
.caret { width: 6px; height: 4px; fill: #444; }
.caret.wide { width: 10px; height: 5px; }
.caret.dark { fill: #111; }

.tabs {
  display: grid; flex: none; height: 21px; background: #9f9f9f;
  grid-template-columns: 52px 104px 84px 78px 60px 86px 77px 122px 104px 54px 78px 80px 66px auto; justify-content: start;
}
.app-menu { width: 47px; height: 18px; border: solid #222; border-width: 0 1px 1px 0; background: linear-gradient(#7b7b7b, #a6a6a6); justify-self: start; }
.app-menu svg { width: 46px; height: 17px; }
.tab { line-height: 20px; text-align: center; }
.tab.active { margin-top: 1px; border-radius: 2px 2px 0 0; background: linear-gradient(#dedede, #fff); line-height: 19px; }
.minimise { display: flex; align-items: center; gap: 6px; padding-left: 31px; padding-bottom: 2px; }
.pill { width: 20px; height: 12px; }

.ribbon {
  display: grid; flex: none; height: 120px; border-bottom: 1px solid #fff; background: #fff; color: #444;
  grid-template-columns: 69px 778px 120px 255px 118px 64px 74px 58px 62px 147px 1fr;
}
.panel { display: flex; flex-direction: column; min-width: 0; border-right: 1px solid #aaa; }
.panel.last { border: 0; }
.body { display: grid; flex: 1; padding-top: 3px; }
.caption { height: 22px; margin: 0 1px; border: solid #ccc; border-width: 1px 0; background: #eee; line-height: 18px; text-align: center; white-space: nowrap; }
.select-caption { display: flex; align-items: center; justify-content: space-between; padding: 0 5px 0 3px; }
.select-caption .caret { width: 10px; height: 5px; }
.ribbon-rest { background: linear-gradient(#e6e8e8, #b4b4b2 75%, #9c9c9c); }
.modify { display: flex; flex-direction: column; align-items: center; align-self: start; width: 60px; height: 89px; padding: 6px 0 0 3px; border: 1px solid #1979c0; background: linear-gradient(#c0dbf0, #a9d3f2); }
.modify .i32 { margin-bottom: 9px; }
.big { display: flex; flex-direction: column; align-items: center; padding-top: 3px; text-align: center; }
.big span { margin-top: 5px; }
.stack { display: grid; grid-template-rows: repeat(3, 31px); }
.stack.pair { grid-template-rows: 31px 31px; padding-top: 15px; }
.small { display: flex; align-items: center; gap: 7px; text-align: left; }
.small:disabled { color: #a9aba9; }
.settings { grid-template-columns: 75px 170px 164px 216px 63px 1fr; }
.settings > .big { padding-right: 3px; }
.divided { padding-left: 12px; margin-bottom: 3px; border-left: 1px solid #ccc; }
.divided .small { gap: 9px; }
.location .small { gap: 8px; }
.with-caret { display: flex; }
.with-caret .big { width: 81px; }
.with-caret .caret { margin-top: 64px; }
.location { padding-left: 42px; }
.design { grid-template-columns: 63px 189px; }
.design .stack { padding-left: 1px; }
.design .small { padding-left: 3px; }
.combo { display: grid; align-items: center; }
.combo > * { grid-area: 1 / 1; }
.combo svg { justify-self: end; pointer-events: none; }
.combo select { width: 100%; height: 27px; border: 1px solid #ccc; border-radius: 0; appearance: none; background: #fafafa; color: #666; font: inherit; }
.combo.model select { padding-left: 4px; }
.combo.model svg { margin-right: 2px; fill: #777; }
.manage { grid-template-columns: 80px 1fr; }
.manage .big { padding-left: 4px; }
.centre { justify-content: center; }
.dyn { grid-template-columns: 64px 64px; padding-left: 9px; }

.options-bar { flex: none; height: 33px; background: #e0e2e1; }
.work { display: grid; flex: 1; min-height: 0; grid-template-columns: 276px 1fr; }
.dock { display: flex; flex-direction: column; min-width: 0; min-height: 0; padding-right: 5px; }
.title { display: flex; align-items: center; justify-content: space-between; height: 27px; padding: 0 6px 0 0; background: #bccddd; font-size: 13px; }
.title svg { color: #111; }
.properties { display: flex; flex-direction: column; flex: none; margin-bottom: 5px; border-bottom: 1px solid #fff; }
.type { display: flex; align-items: center; height: 91px; margin: 2px 2px 1px 0; padding-right: 2px; border: solid #666; border-width: 2px 0 0; background: linear-gradient(#fff, #ececec); color: #444; }
.thumb { display: grid; place-items: center start; width: 84px; height: 82px; padding-left: 22px; border: 1px solid #ccc; background: #f7f7f7; }
.type-name { flex: 1; padding-left: 5px; text-align: left; }
.instance { display: flex; height: 28px; gap: 6px; }
.combo.view { width: 173px; }
.combo.view select { border-color: #aaa; padding-left: 3px; background: #e2e2e2; color: #111; }
.combo.view svg { margin-right: 5px; }
.edit-type { display: flex; align-items: center; gap: 6px; height: 24px; }
.grid-area { display: flex; height: 213px; }
.grid-body { width: 248px; overflow: hidden; }
.group { display: flex; align-items: center; justify-content: space-between; height: 23px; padding: 0 4px 0 1px; background: #d9dbda; }
.props { width: 248px; border-collapse: collapse; table-layout: fixed; background: #fff; }
.props .name { width: 115px; }
.props .value { width: 117px; }
.props tr { height: 24px; }
.props th, .props td { height: 24px; padding: 0 0 0 3px; border: dotted #777; border-width: 0 1px 1px 0; font-weight: 400; line-height: 20px; text-align: left; white-space: nowrap; overflow: hidden; }
.props th { padding-left: 9px; }
.props .muted { color: #777; }
.props .flush { padding: 0; }
.props input { display: block; width: 100%; height: 23px; padding: 0 6px; border: 1px solid #000; background: #fff; font: inherit; outline: 0; }
.edit { display: block; width: 100%; height: 22px; border: 1px solid #aaa; border-right-width: 2px; border-bottom-width: 2px; background: #e1e1e1; line-height: 18px; }
.vscroll { display: flex; flex-direction: column; align-items: center; width: 20px; padding: 6px 0 5px; background: #efefef; }
.vscroll svg:last-child { margin-top: auto; }
.thumb-bar { background: #cdcccb; }
.short { width: 19px; height: 40px; margin-top: 5px; }
.tall { width: 19px; height: 67%; margin-top: 5px; }
.foot { display: flex; align-items: center; justify-content: space-between; height: 31px; padding: 0 4px 0 2px; }
.foot a { padding-bottom: 3px; color: #0a62ad; line-height: 20px; }
.foot button { width: 86px; height: 26px; border: 1px solid #bbb; background: #ccc; color: #888; }

.browser { display: flex; flex: 1; flex-direction: column; min-height: 0; }
.tree-area { display: flex; flex: 1; min-height: 0; margin: 2px 2px 0 0; border-top: 2px solid #666; }
.tree { flex: 1; min-width: 0; margin: 0; padding: 1px 0 0 12px; overflow: hidden; background: #fff; list-style: none; }
.row { display: flex; align-items: center; height: 22px; padding-left: 16px; }
.row > * { flex: none; }
.row.root { padding-left: 0; }
.root .toggle { margin-left: -10px; }
.toggle { display: block; width: 13px; height: 13px; border: 1px solid #8a8a8a; background: linear-gradient(#fff, #e1e1e1); }
.toggle svg { width: 11px; height: 11px; }
.toggle-cell { display: grid; align-items: center; width: 13px; height: 22px; background: repeating-linear-gradient(#999 0 1px, transparent 1px 3px) 6px 0 / 1px 100% no-repeat; }
.toggle-cell.end { background-size: 1px 50%; }
.dash { width: 12px; height: 1px; border-top: 1px dotted #888; }
.root-dash { width: 8px; margin: 0 1px; }
.first-dash { width: 11px; margin-right: 1px; }
.label { padding: 0 4px 0 3px; white-space: nowrap; }
.root .label { margin-left: 4px; padding-left: 3px; }
.selected { background: #e1e1e1; }
.trunk { width: 26px; height: 22px; margin-left: 6px; }
.trunk.on { border-left: 1px dotted #999; }
.elbow { display: grid; grid-template-rows: 11px 11px; width: 19px; height: 22px; }
.elbow i { border-left: 1px dotted #888; }
.elbow i:first-child { border-bottom: 1px dotted #888; }
.elbow.end i:last-child { border: 0; }
.hscroll { display: flex; flex: none; align-items: center; justify-content: space-between; height: 18px; padding: 0 27px 0 19px; background: #efefef; }
.hscroll .thumb-bar { width: 196px; height: 17px; }

.viewport { display: grid; grid-template: 1fr 18px / 1fr 6px; min-width: 0; min-height: 0; border: solid #666; border-width: 2px 0 0 1px; }
.canvas { position: relative; min-width: 0; overflow: hidden; background: #fefefe; }
.model-drawing { position: absolute; top: 214px; left: 375px; width: 570px; height: 460px; }
.window-buttons { position: absolute; top: 8px; right: 4px; display: flex; gap: 6px; }
.window-buttons svg { width: 12px; height: 12px; }
.cube { position: absolute; top: 80px; right: 21px; width: 140px; height: 110px; }
.navbar { position: absolute; top: 199px; right: 1px; display: flex; flex-direction: column; align-items: center; width: 36px; height: 118px; border: 2px solid #bbb; border-radius: 4px; background: #f5f5f5; }
.navbar .corner { align-self: flex-end; margin: 1px 2px 10px 0; }
.navbar .corner.bottom { margin: auto 2px 2px 0; }
.corner svg { width: 8px; height: 8px; }
.wheel svg { width: 22px; height: 22px; }
.zoom svg { width: 17px; height: 17px; }
.navbar hr { width: 26px; margin: 4px 0 8px; border: 0; border-top: 1px solid #bbb; }
.navbar .caret { margin-top: 8px; fill: #888; }
.vbar { background: #efefef; }
.vbar i { display: block; height: 21px; margin-top: 374px; background: #ccc; }
.status { display: flex; grid-column: 1 / 3; align-items: center; gap: 5px; padding-right: 13px; background: #efefef; }
.scale { width: 87px; padding-left: 27px; line-height: 18px; text-align: left; }
.ctl { flex: none; }
.rail { flex: 1; height: 18px; }
.rail i { display: block; width: 21px; height: 18px; margin-left: 49%; background: #ccc; }
</style>
